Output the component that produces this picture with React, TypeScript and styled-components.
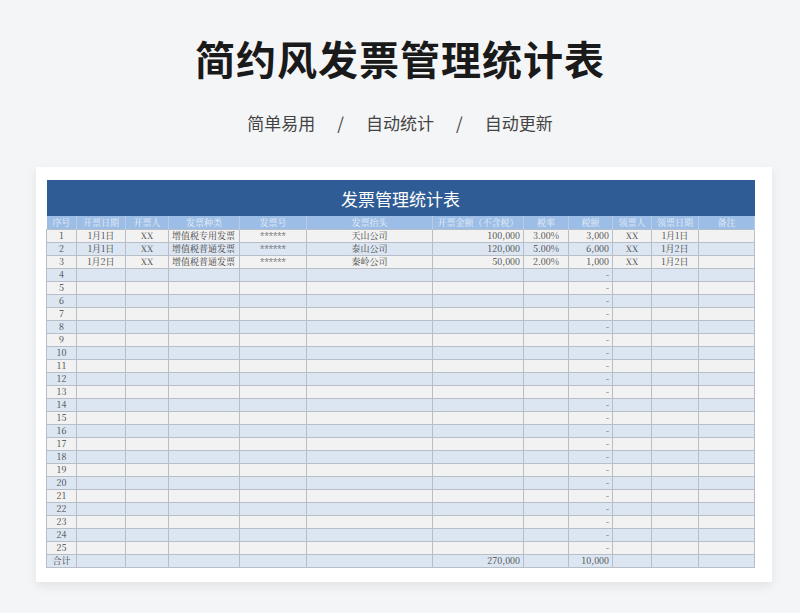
import React from "react";
import styled, { createGlobalStyle } from "styled-components";

const G = createGlobalStyle`
  body{margin:0;background:#f4f5f7;font-family:"Noto Sans CJK SC","Noto Sans",sans-serif;}
`;
const Page = styled.div`width:800px;height:613px;display:flex;flex-direction:column;align-items:center;overflow:hidden;`;
const Title = styled.h1`margin:28px 0 0;font-size:40px;font-weight:700;color:#1a1a1a;letter-spacing:1px;line-height:60px;`;
const Sub = styled.div`margin-top:23px;font-size:17px;color:#444;display:flex;gap:22px;line-height:24px;`;
const Card = styled.div`margin-top:32px;width:736px;padding:13px 0 14px 10px;box-sizing:border-box;background:#fff;box-shadow:0 4px 10px rgba(0,0,0,0.08);margin-left:8px;`;
const Table = styled.table`border-collapse:collapse;width:708px;table-layout:fixed;font-family:"Noto Serif CJK SC","Liberation Serif","Noto Sans CJK SC",serif;font-size:9px;color:#444;`;
const Cap = styled.td`background:#2f5c94;color:#fff;height:34px;text-align:center;font-size:17px;font-family:"Noto Sans CJK SC",sans-serif;`;
const Th = styled.td`background:#9cbde5;color:#e8f0fa;height:13px;padding:0;text-align:center;font-weight:400;font-size:9px;line-height:13px;border-right:1px solid #b7cbe6;`;
const Td = styled.td<{ $a?: string; $alt?: boolean }>`height:12px;padding:0 3px;line-height:12px;text-align:${p=>p.$a||"center"};background:${p=>p.$alt?"#dce6f2":"#f2f2f2"};border:1px solid #b8bec7;white-space:nowrap;overflow:hidden;`;

const widths=[30,49,43,71,67,126,91,45,44,39,47,56];
const heads=["序号","开票日期","开票人","发票种类","发票号","发票抬头","开票金额（不含税）","税率","税额","领票人","领票日期","备注"];
const data:string[][]=[
 ["1","1月1日","XX","增值税专用发票","******","天山公司","100,000","3.00%","3,000","XX","1月1日",""],
 ["2","1月1日","XX","增值税普通发票","******","泰山公司","120,000","5.00%","6,000","XX","1月2日",""],
 ["3","1月2日","XX","增值税普通发票","******","秦岭公司","50,000","2.00%","1,000","XX","1月2日",""],
];
for(let i=4;i<=25;i++) data.push([String(i),"","","","","","","","-","","",""]);
data.push(["合计","","","","","","270,000","","10,000","","",""]);
const align=(c:number)=>c===6||c===8?"right":c===3?"left":"center";

export default function App(){
  return(<Page><G/>
    <Title>简约风发票管理统计表</Title>
    <Sub><span>简单易用</span><span>/</span><span>自动统计</span><span>/</span><span>自动更新</span></Sub>
    <Card>
      <Table>
        <colgroup>{widths.map((w,i)=><col key={i} style={{width:w}}/>)}</colgroup>
        <tbody>
          <tr><Cap colSpan={12}>发票管理统计表</Cap></tr>
          <tr>{heads.map(h=><Th key={h}>{h}</Th>)}</tr>
          {data.map((r,i)=><tr key={i}>{r.map((c,j)=><Td key={j} $a={align(j)} $alt={i%2===1}>{c}</Td>)}</tr>)}
        </tbody>
      </Table>
    </Card>
  </Page>);
}
